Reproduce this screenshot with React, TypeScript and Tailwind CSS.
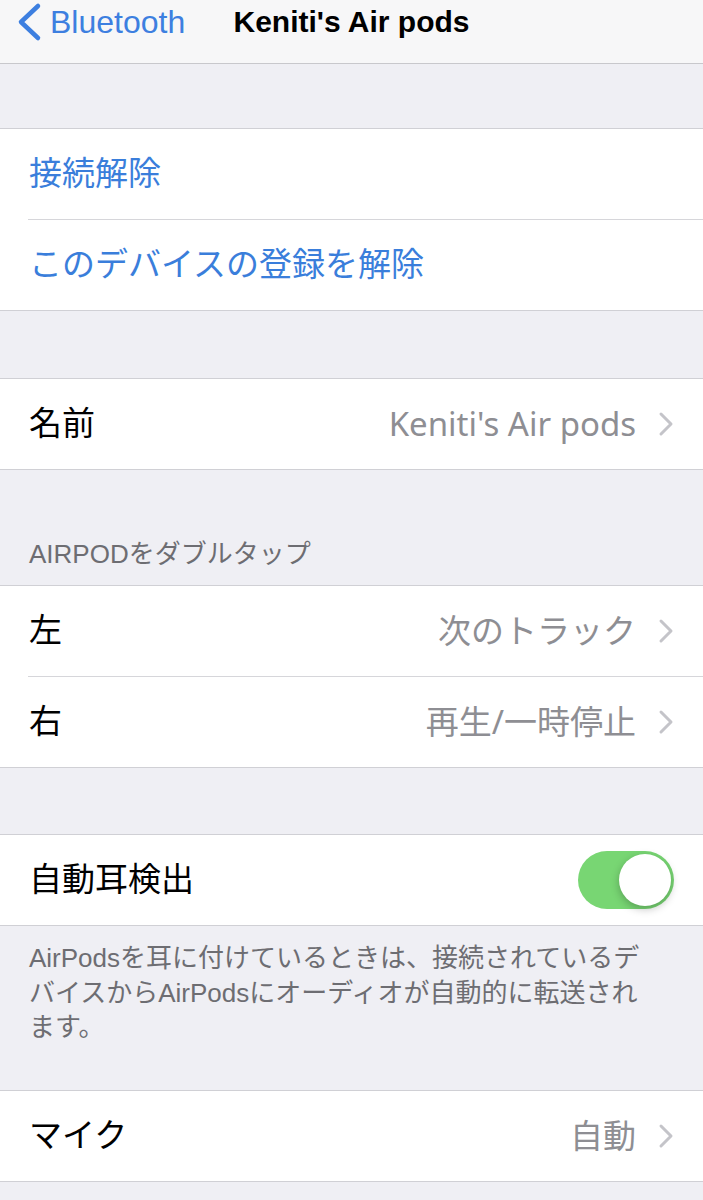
import React from "react";

const FONT = '"Liberation Sans", "Noto Sans CJK JP", sans-serif';
const VALFONT = '"Noto Sans", "Noto Sans CJK JP", sans-serif';

function Chevron() {
  return (
    <svg width="16" height="26" viewBox="0 0 16 26" className="shrink-0">
      <polyline
        points="3,3 13,13 3,23"
        fill="none"
        stroke="#c4c4c9"
        strokeWidth="3"
        strokeLinecap="round"
        strokeLinejoin="round"
      />
    </svg>
  );
}

function Sep() {
  return <div className="ml-[28px] h-px bg-[#d6d6da]" />;
}

function Row({
  label,
  value,
  blue,
  chevron,
  right,
}: {
  label: string;
  value?: string;
  blue?: boolean;
  chevron?: boolean;
  right?: React.ReactNode;
}) {
  return (
    <div className="flex h-[90px] items-center pl-[29px] pr-[29px]">
      <div
        className={`flex-1 text-[33px] ${blue ? "text-[#3a7edb]" : "text-black"}`}
      >
        {label}
      </div>
      {value && (
        <div
          className="mr-[22px] text-[33px] text-[#8e8e93]"
          style={{ fontFamily: VALFONT }}
        >
          {value}
        </div>
      )}
      {chevron && <Chevron />}
      {right}
    </div>
  );
}

function Section({ children }: { children: React.ReactNode }) {
  return (
    <div className="border-y border-[#d0d0d5] bg-white">{children}</div>
  );
}

function Toggle() {
  return (
    <div className="flex h-[58px] w-[96px] items-center justify-end rounded-full bg-[#78d673] p-[3px]">
      <div className="h-[52px] w-[52px] rounded-full bg-white shadow-[0_3px_8px_rgba(0,0,0,0.25)]" />
    </div>
  );
}

export default function App() {
  return (
    <div
      className="min-h-screen w-full bg-[#efeff4]"
      style={{ fontFamily: FONT }}
    >
      {/* Nav bar */}
      <div className="h-[64px] border-b border-[#c8c8cc] bg-[#f7f7f8] pb-[19px]">
        <div className="grid h-[44px] grid-cols-[1fr_auto_1fr] items-center">
          <div className="flex items-center pl-[16px]">
            <svg width="26" height="40" viewBox="0 0 26 40" className="shrink-0">
              <polyline
                points="22,4 5,20 22,36"
                fill="none"
                stroke="#3d7fe0"
                strokeWidth="4.5"
                strokeLinecap="round"
                strokeLinejoin="round"
              />
            </svg>
            <span className="ml-[8px] text-[32px] leading-none text-[#3d7fe0]">
              Bluetooth
            </span>
          </div>
          <div className="text-[30px] font-bold leading-none text-black">
            Keniti's Air pods
          </div>
          <div />
        </div>
      </div>

      <div className="h-[64px]" />
      <Section>
        <Row label="接続解除" blue />
        <Sep />
        <Row label="このデバイスの登録を解除" blue />
      </Section>

      <div className="h-[67px]" />
      <Section>
        <Row label="名前" value="Keniti's Air pods" chevron />
      </Section>

      <div className="flex h-[115px] items-end pb-[16px] pl-[29px]">
        <div className="text-[26px] leading-[30px] text-[#6d6d72]">
          AIRPODをダブルタップ
        </div>
      </div>
      <Section>
        <Row label="左" value="次のトラック" chevron />
        <Sep />
        <Row label="右" value="再生/一時停止" chevron />
      </Section>

      <div className="h-[66px]" />
      <Section>
        <Row label="自動耳検出" right={<Toggle />} />
      </Section>

      <div className="h-[164px] pl-[29px] pt-[15px] text-[26px] leading-[34.5px] text-[#6d6d72]">
        <div className="whitespace-nowrap">
          AirPodsを耳に付けているときは、接続されているデ
        </div>
        <div className="whitespace-nowrap">
          バイスからAirPodsにオーディオが自動的に転送され
        </div>
        <div className="whitespace-nowrap">ます。</div>
      </div>
      <Section>
        <Row label="マイク" value="自動" chevron />
      </Section>
      <div className="h-[19px]" />
    </div>
  );
}
